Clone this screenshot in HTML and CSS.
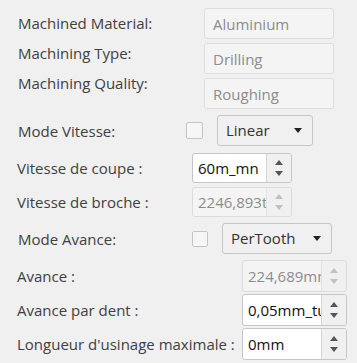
FILE: index.html
```html
<!DOCTYPE html>
<html lang="fr">
<head>
    <meta charset="UTF-8">
    <title>Machining Parameters</title>
    <link rel="stylesheet" href="styles.css">
</head>
<body>
    <div class="panel">
        <!-- Read-only machining info -->
        <div class="info-group">
            <div class="info-labels">
                <div class="lbl">Machined Material:</div>
                <div class="lbl">Machining Type:</div>
                <div class="lbl">Machining Quality:</div>
            </div>
            <div class="info-fields">
                <div class="ro-box">Aluminium</div>
                <div class="ro-box">Drilling</div>
                <div class="ro-box">Roughing</div>
            </div>
        </div>

        <!-- Speed mode -->
        <div class="mode-row mode-speed">
            <div class="lbl">Mode Vitesse:</div>
            <span class="check"></span>
            <div class="combo">Linear<span class="combo-arrow"></span></div>
        </div>

        <div class="spin-group speed-group">
            <div class="spin-row">
                <div class="lbl">Vitesse de coupe :</div>
                <div class="spin">
                    <div class="spin-value">60m_mn</div>
                    <div class="spin-btns"><span class="up"></span><span class="down"></span></div>
                </div>
            </div>
            <div class="spin-row">
                <div class="lbl">Vitesse de broche :</div>
                <div class="spin disabled">
                    <div class="spin-value">2246,893tr_mn</div>
                    <div class="spin-btns"><span class="up"></span><span class="down"></span></div>
                </div>
            </div>
        </div>

        <!-- Feed mode -->
        <div class="mode-row mode-feed">
            <div class="lbl">Mode Avance:</div>
            <span class="check"></span>
            <div class="combo">PerTooth<span class="combo-arrow"></span></div>
        </div>

        <div class="spin-group feed-group">
            <div class="spin-row">
                <div class="lbl">Avance :</div>
                <div class="spin disabled">
                    <div class="spin-value">224,689mm_mn</div>
                    <div class="spin-btns"><span class="up"></span><span class="down"></span></div>
                </div>
            </div>
            <div class="spin-row">
                <div class="lbl">Avance par dent :</div>
                <div class="spin">
                    <div class="spin-value">0,05mm_tu</div>
                    <div class="spin-btns"><span class="up"></span><span class="down"></span></div>
                </div>
            </div>
            <div class="spin-row">
                <div class="lbl">Longueur d'usinage maximale :</div>
                <div class="spin">
                    <div class="spin-value">0mm</div>
                    <div class="spin-btns"><span class="up"></span><span class="down"></span></div>
                </div>
            </div>
        </div>
    </div>
</body>
</html>
```

FILE: styles.css
```css
html, body {
    margin: 0;
    padding: 0;
    background: #f0f0f0;
}
body {
    width: 357px;
    height: 363px;
    overflow: hidden;
    font-family: "Open Sans", "Noto Sans", sans-serif;
    font-size: 15px;
    color: #404040;
}
.panel {
    display: flex;
    flex-direction: column;
}
.lbl {
    white-space: nowrap;
    flex: none;
}
/* Read-only info block */
.info-group {
    display: flex;
    padding-top: 8px;
}
.info-labels {
    width: 204px;
    padding-left: 18px;
    box-sizing: border-box;
}
.info-labels .lbl {
    height: 30px;
    line-height: 31px;
}
.info-fields {
    display: flex;
    flex-direction: column;
    gap: 4px;
}
.ro-box {
    width: 130px;
    height: 31px;
    box-sizing: border-box;
    border: 1px solid #dedede;
    border-radius: 3px;
    background: #f4f4f4;
    color: #8c8c8c;
    padding: 2px 0 0 8px;
    line-height: 27px;
}
/* Mode rows: label + checkbox + combo */
.mode-row {
    display: flex;
    align-items: center;
    height: 31px;
    margin-top: 6px;
}
.mode-speed .lbl {
    width: 168px;
    padding-left: 18px;
}
.mode-feed .lbl {
    width: 174px;
    padding-left: 18px;
}
.check {
    flex: none;
    width: 17px;
    height: 17px;
    box-sizing: border-box;
    border: 1px solid #c4c4c4;
    border-radius: 2px;
    background: #f6f6f6;
    margin-right: 14px;
}
.mode-feed .check {
    width: 16px;
    height: 16px;
}
.combo {
    position: relative;
    height: 31px;
    box-sizing: border-box;
    border: 1px solid #c6c6c6;
    border-radius: 3px;
    background: #f0f0f0;
    color: #333;
    padding: 0 0 0 8px;
    line-height: 29px;
}
.mode-speed .combo {
    width: 96px;
}
.mode-feed .combo {
    width: 110px;
}
.combo-arrow {
    position: absolute;
    right: 10px;
    top: 12px;
    border-left: 4px solid transparent;
    border-right: 4px solid transparent;
    border-top: 5px solid #222;
}
/* Spin boxes */
.spin-group {
    display: flex;
    flex-direction: column;
}
.speed-group {
    margin-top: 7px;
    gap: 4px;
}
.feed-group {
    margin-top: 6px;
    gap: 2px;
}
.spin-row {
    display: flex;
    align-items: center;
}
.speed-group .lbl {
    width: 175px;
    padding-left: 17px;
}
.feed-group .lbl {
    width: 225px;
    padding-left: 17px;
}
.spin {
    display: flex;
    flex: none;
    box-sizing: border-box;
    border: 1px solid #c6c6c6;
    border-radius: 3px;
    overflow: hidden;
    background: #fff;
}
.speed-group .spin {
    width: 100px;
    height: 30px;
}
.feed-group .spin {
    width: 105px;
    height: 32px;
}
.spin-value {
    flex: 1;
    min-width: 0;
    overflow: hidden;
    white-space: nowrap;
    color: #111;
    padding: 0 0 0 5px;
    display: flex;
    align-items: center;
}
.spin-btns {
    flex: none;
    width: 24px;
    border-left: 1px solid #d4d4d4;
    background: #f0f0f0;
    display: flex;
    flex-direction: column;
    align-items: center;
    justify-content: center;
    gap: 6px;
}
.spin-btns .up {
    border-left: 4px solid transparent;
    border-right: 4px solid transparent;
    border-bottom: 5px solid #555;
}
.spin-btns .down {
    border-left: 4px solid transparent;
    border-right: 4px solid transparent;
    border-top: 5px solid #555;
}
.spin.disabled {
    background: #f4f4f4;
    border-color: #dcdcdc;
}
.spin.disabled .spin-value {
    color: #8c8c8c;
}
.spin.disabled .spin-btns {
    border-left-color: #e2e2e2;
}
.spin.disabled .up {
    border-bottom-color: #c0c0c0;
}
.spin.disabled .down {
    border-top-color: #c0c0c0;
}
```
